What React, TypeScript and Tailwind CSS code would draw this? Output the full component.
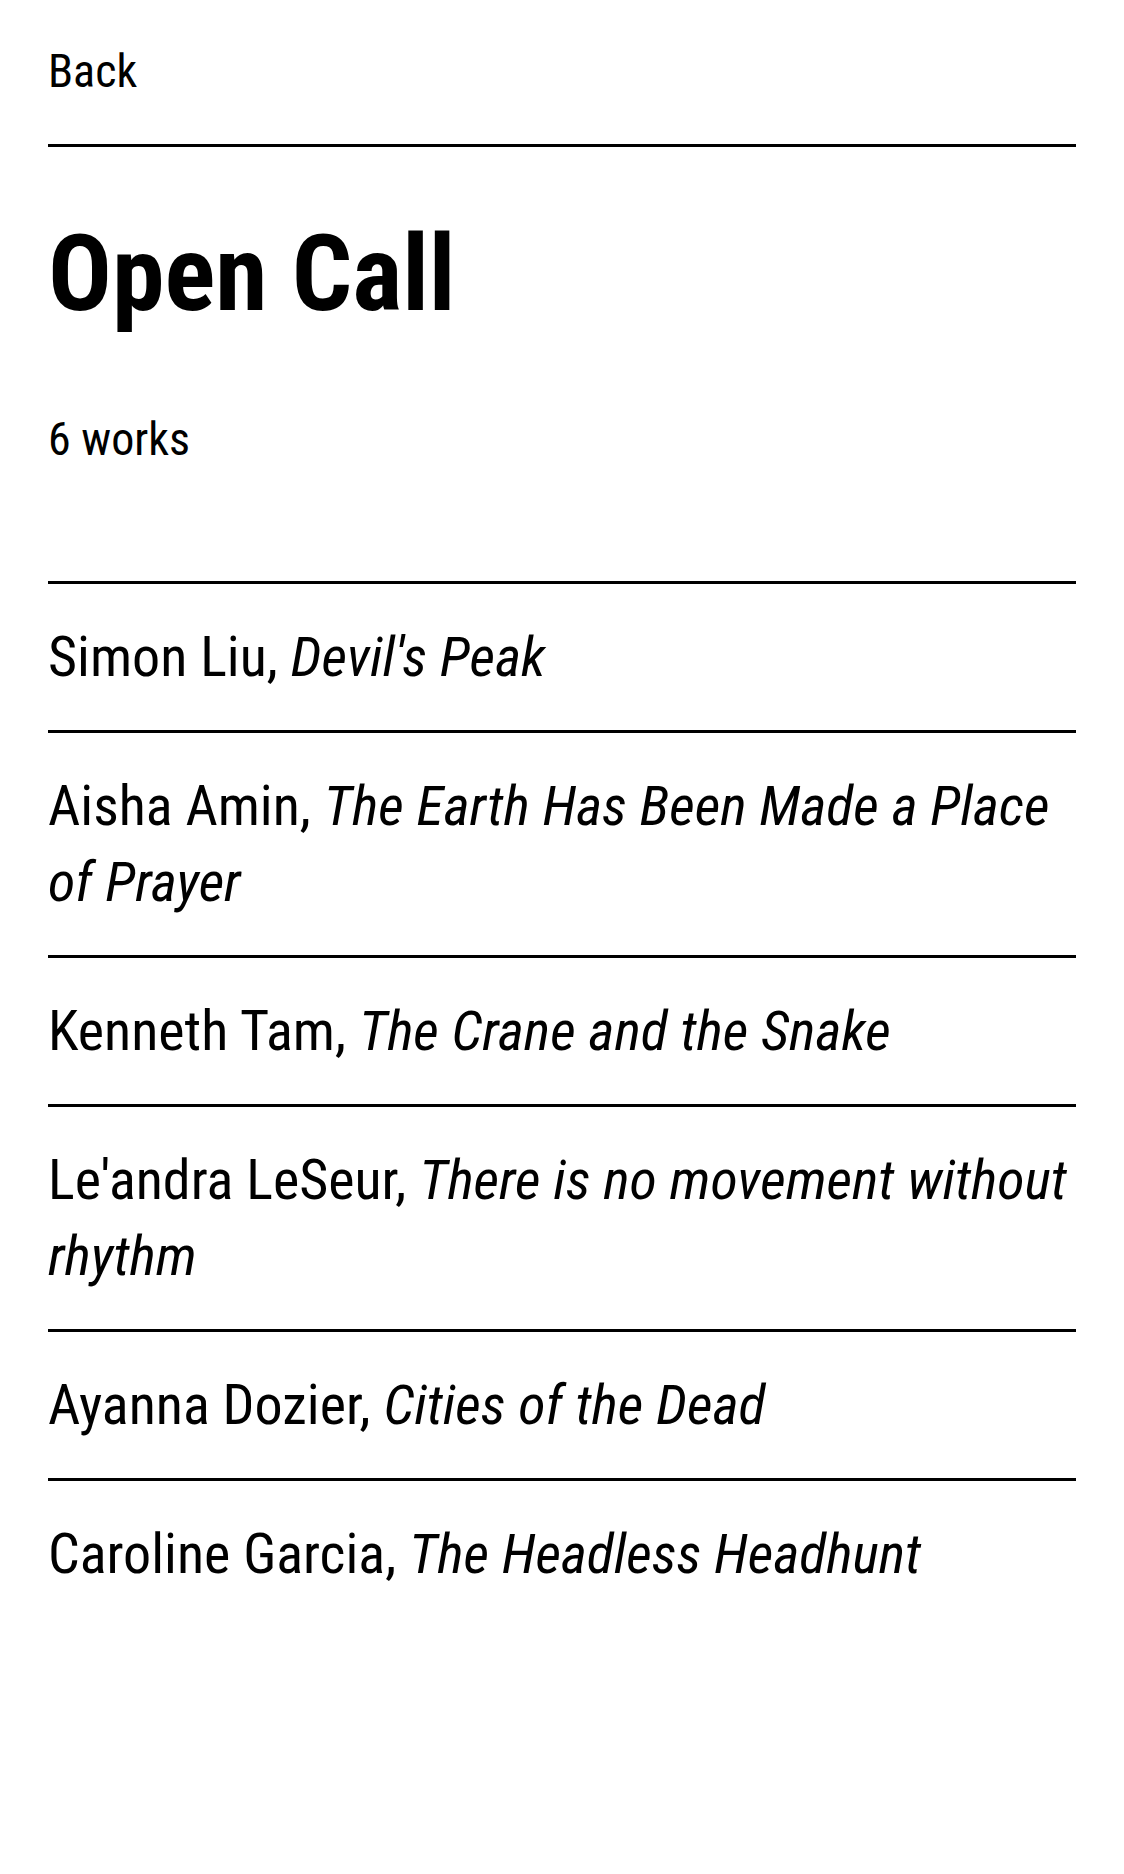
const works = [
  { artist: "Simon Liu", title: "Devil's Peak" },
  { artist: "Aisha Amin", title: "The Earth Has Been Made a Place of Prayer" },
  { artist: "Kenneth Tam", title: "The Crane and the Snake" },
  { artist: "Le'andra LeSeur", title: "There is no movement without rhythm" },
  { artist: "Ayanna Dozier", title: "Cities of the Dead" },
  { artist: "Caroline Garcia", title: "The Headless Headhunt" },
]

export default function App() {
  return (
    <div className="min-h-screen bg-white px-[48px] text-black font-stretch-condensed [font-family:'Roboto_Condensed',Roboto,sans-serif]">
      <header className="border-b-[3px] border-black pb-[45px] pt-[43px]">
        <a href="#" className="text-[46px] leading-[56px]">
          Back
        </a>
      </header>

      <h1 className="mt-[74px] text-[106px] font-bold leading-[106px]">Open Call</h1>

      <p className="mt-[84px] text-[46px] leading-[56px]">6 works</p>

      <ul className="mt-[114px] border-t-[3px] border-black">
        {works.map((w, i) => (
          <li
            key={w.artist}
            className={
              i < works.length - 1
                ? "border-b-[3px] border-black py-[35px] text-[56px] leading-[76px]"
                : "py-[35px] text-[56px] leading-[76px]"
            }
          >
            {w.artist}, <em className="italic">{w.title}</em>
          </li>
        ))}
      </ul>
    </div>
  )
}
